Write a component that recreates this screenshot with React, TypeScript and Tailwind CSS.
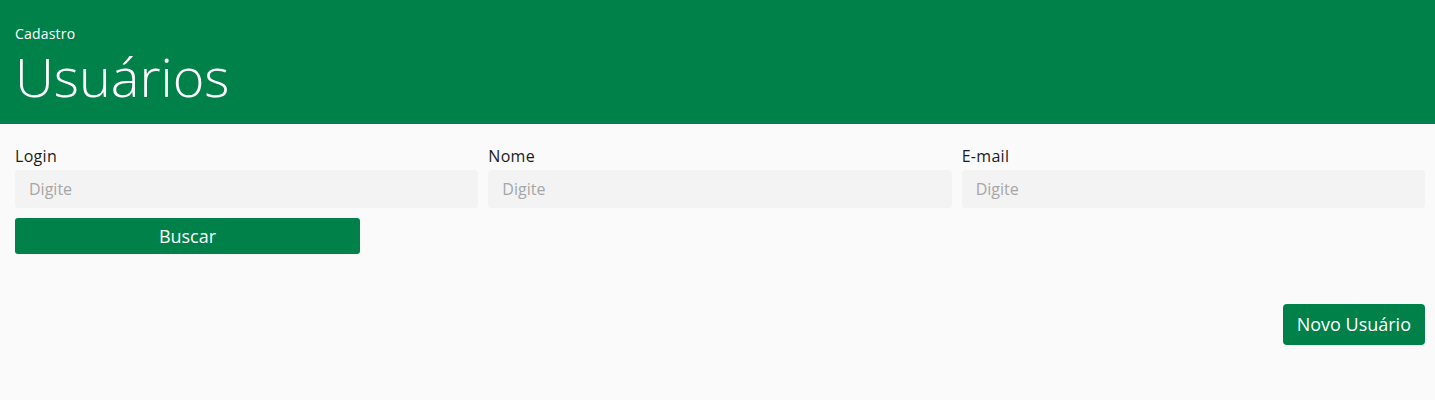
export default function App() {
  const font = { fontFamily: '"Open Sans", "Liberation Sans", sans-serif' };
  return (
    <div className="min-h-[400px] bg-[#fafafa]" style={font}>
      <header className="h-[124px] bg-[#00814a] px-[15px] pt-[25px] text-white">
        <div className="text-[14px] leading-[18px] tracking-[0.2px]">Cadastro</div>
        <h1 className="mt-[6px] text-[54px] font-light leading-[54px]">Usuários</h1>
      </header>
      <main className="pt-[20px] pr-[10px] pl-[15px]">
        <div className="grid grid-cols-3 gap-x-[10px]">
          {['Login', 'Nome', 'E-mail'].map((l) => (
            <label key={l} className="flex flex-col gap-[2px]">
              <span className="text-[16px] leading-[24px] tracking-[0.3px] text-[#1c1c1c]">{l}</span>
              <input
                placeholder="Digite"
                className="h-[38px] rounded-[4px] bg-[#f3f3f3] px-[14px] text-[16px] text-[#333] outline-none placeholder:text-[#a6a6a6]"
              />
            </label>
          ))}
        </div>
        <button className="mt-[10px] h-[36px] w-[345px] rounded-[3px] bg-[#00814a] text-[18px] text-white">
          Buscar
        </button>
        <div className="mt-[50px] flex justify-end">
          <button className="h-[41px] rounded-[4px] bg-[#00814a] px-[14px] text-[18px] text-white">
            Novo Usuário
          </button>
        </div>
      </main>
    </div>
  );
}
